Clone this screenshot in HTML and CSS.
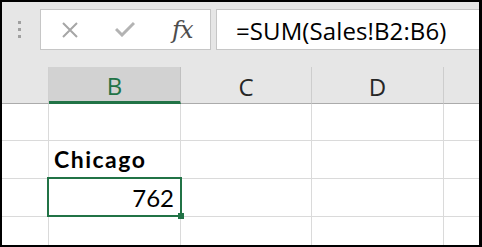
FILE: index.html
```html
<!DOCTYPE html>
<html>
<head>
<meta charset="utf-8">
<link rel="stylesheet" href="styles.css">
</head>
<body>
<div class="frame">
  <div class="toolbar">
    <div class="grip"><span></span><span></span><span></span></div>
    <div class="btnbox">
      <svg class="ico-x" width="16" height="16" viewBox="0 0 16 16"><path d="M1 1 L15 15 M15 1 L1 15" stroke="#a6a6a6" stroke-width="2" fill="none"/></svg>
      <svg class="ico-ok" width="20" height="16" viewBox="0 0 20 16"><path d="M1 8 L7 14 L19 2" stroke="#b3b3b3" stroke-width="3" fill="none"/></svg>
      <span class="fx">fx</span>
    </div>
    <div class="formula">=SUM(Sales!B2:B6)</div>
  </div>
  <div class="sheet">
    <div class="hd corner"></div>
    <div class="hd sel-hd">B</div>
    <div class="hd">C</div>
    <div class="hd">D</div>
    <div class="hd last"></div>

    <div class="c"></div><div class="c"></div><div class="c"></div><div class="c"></div><div class="c last"></div>

    <div class="c"></div><div class="c txt bold">Chicago</div><div class="c"></div><div class="c"></div><div class="c last"></div>

    <div class="c"></div><div class="c txt num active">762<div class="sel"><div class="handle"></div></div></div><div class="c"></div><div class="c"></div><div class="c last"></div>

    <div class="c bot"></div><div class="c bot"></div><div class="c bot"></div><div class="c bot"></div><div class="c bot last"></div>
  </div>
</div>
</body>
</html>
```

FILE: styles.css
```css
* { box-sizing: border-box; }
html, body { margin: 0; padding: 0; background: #fff; }
.frame {
  width: 482px;
  height: 247px;
  border: 2px solid #000;
  border-right-width: 3px;
  display: flex;
  flex-direction: column;
  background: #fff;
  overflow: hidden;
}
.toolbar {
  height: 65px;
  flex: none;
  background: #e6e6e6;
  display: flex;
  align-items: flex-start;
  padding-top: 7px;
}
.grip {
  width: 38px;
  height: 41px;
  display: flex;
  flex-direction: column;
  align-items: center;
  justify-content: center;
  gap: 4px;
  padding-right: 4px;
}
.grip span {
  width: 3px;
  height: 3px;
  background: #a0a0a0;
}
.btnbox {
  width: 171px;
  height: 41px;
  background: #fff;
  border: 1px solid #c6c6c6;
  display: flex;
  align-items: center;
}
.ico-x { margin-left: 21px; flex: none; }
.ico-ok { margin-left: 37px; flex: none; margin-top: -1px; }
.fx {
  margin-left: 37px;
  margin-top: 1px;
  font-family: "DejaVu Serif", "Liberation Serif", serif;
  font-style: italic;
  font-size: 24px;
  color: #4d4d4d;
  letter-spacing: -1px;
}
.formula {
  flex: 1;
  margin-left: 5px;
  height: 41px;
  background: #fff;
  border: 1px solid #c6c6c6;
  border-right: none;
  display: flex;
  align-items: center;
  padding-left: 19px;
  padding-top: 1px;
  font-family: "Open Sans", "Noto Sans", sans-serif;
  font-size: 24px;
  letter-spacing: 0.1px;
  color: #000;
  white-space: nowrap;
}
.sheet {
  flex: 1;
  display: grid;
  grid-template-columns: 47px 132px 131px 132px 1fr;
  grid-template-rows: 37px 37px 38px 38px 1fr;
}
.hd {
  background: #e6e6e6;
  border-right: 1px solid #cdcdcd;
  border-bottom: 1px solid #ababab;
  display: flex;
  align-items: center;
  justify-content: center;
  padding-top: 2px;
  font-family: "Open Sans", "Noto Sans", sans-serif;
  font-size: 24px;
  color: #262626;
}
.hd.corner { border-right-color: #d0d0d0; }
.hd.sel-hd {
  background: #d2d2d2;
  color: #217346;
  border-bottom: 3px solid #217346;
  border-right-color: #c0c0c0;
}
.hd.last { border-right: none; }
.c {
  border-right: 1px solid #dadada;
  border-bottom: 1px solid #dadada;
  background: #fff;
}
.c.last { border-right: none; }
.c.bot { border-bottom: none; }
.txt {
  display: flex;
  align-items: flex-end;
  padding: 0 6px 7px 5px;
  font-family: "Lato", "Open Sans", sans-serif;
  font-size: 23px;
  line-height: 23px;
  color: #000;
  white-space: nowrap;
}
.bold { font-weight: 700; letter-spacing: 1.5px; }
.num { justify-content: flex-end; font-size: 24px; }
.active { position: relative; }
.sel {
  position: absolute;
  left: -2px;
  top: -2px;
  width: 135px;
  height: 40px;
  border: 2px solid #217346;
}
.handle {
  position: absolute;
  right: -4px;
  bottom: -4px;
  width: 6px;
  height: 6px;
  background: #217346;
}
```
